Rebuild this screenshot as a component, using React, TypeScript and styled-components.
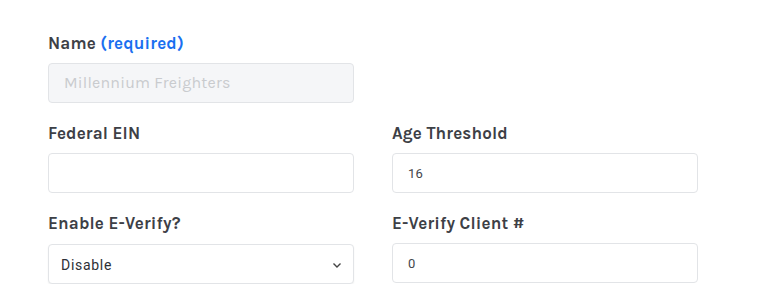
import React from "react";
import styled, { createGlobalStyle } from "styled-components";

const GlobalStyle = createGlobalStyle`
  body {
    margin: 0;
    background: #ffffff;
    font-family: "Karla", Lato, "Liberation Sans", sans-serif;
  }
`;

const Form = styled.form`
  display: grid;
  grid-template-columns: 306px 306px;
  column-gap: 38px;
  row-gap: 20px;
  padding: 33px 0 0 48px;
`;

const Field = styled.div`
  display: flex;
  flex-direction: column;
`;

const FullRow = styled.div`
  grid-column: 1 / -1;
  display: grid;
  grid-template-columns: 306px;
`;

const Label = styled.label`
  font-size: 17px;
  font-weight: 700;
  line-height: 21px;
  color: #3d4046;
  margin-bottom: 9px;
  letter-spacing: 0.15px;
`;

const Required = styled.span`
  color: #1a6ff0;
`;

const Input = styled.input`
  box-sizing: border-box;
  width: 100%;
  height: 40px;
  border: 1px solid #e2e4e7;
  border-radius: 4px;
  padding: 0 15px;
  font-family: Roboto, "Liberation Sans", sans-serif;
  font-size: 13px;
  letter-spacing: 0.3px;
  color: #44464b;
  background: #fff;
  outline: none;

  &:disabled {
    background: #f5f6f8;
  }
  &::placeholder {
    font-family: "Karla", Lato, sans-serif;
    font-size: 16px;
    letter-spacing: 0.2px;
    color: #c9cbce;
  }
`;

const SelectWrap = styled.div`
  position: relative;
  height: 40px;
  margin-top: 1px;
`;

const Select = styled.select`
  box-sizing: border-box;
  appearance: none;
  width: 100%;
  height: 40px;
  border: 1px solid #e2e4e7;
  border-radius: 4px;
  padding: 2px 12px 0;
  font-family: Roboto, "Liberation Sans", sans-serif;
  font-size: 14px;
  letter-spacing: 0.7px;
  color: #2d3036;
  background: #fff;
  box-shadow: 0 1px 2px rgba(0, 0, 0, 0.06);
  outline: none;
`;

const Chevron = styled.svg`
  position: absolute;
  right: 12px;
  top: 18px;
  pointer-events: none;
`;

export default function App() {
  return (
    <>
      <GlobalStyle />
      <Form>
        <FullRow>
          <Field>
            <Label>
              Name <Required>(required)</Required>
            </Label>
            <Input disabled placeholder="Millennium Freighters" />
          </Field>
        </FullRow>
        <Field>
          <Label>Federal EIN</Label>
          <Input />
        </Field>
        <Field>
          <Label>Age Threshold</Label>
          <Input defaultValue="16" />
        </Field>
        <Field>
          <Label>Enable E-Verify?</Label>
          <SelectWrap>
            <Select defaultValue="disable">
              <option value="disable">Disable</option>
              <option value="enable">Enable</option>
            </Select>
            <Chevron width="10" height="7" viewBox="0 0 10 7">
              <path d="M1.5 1.5 L5 5 L8.5 1.5" fill="none" stroke="#444" strokeWidth="1.4" />
            </Chevron>
          </SelectWrap>
        </Field>
        <Field>
          <Label>E-Verify Client #</Label>
          <Input defaultValue="0" />
        </Field>
      </Form>
    </>
  );
}
